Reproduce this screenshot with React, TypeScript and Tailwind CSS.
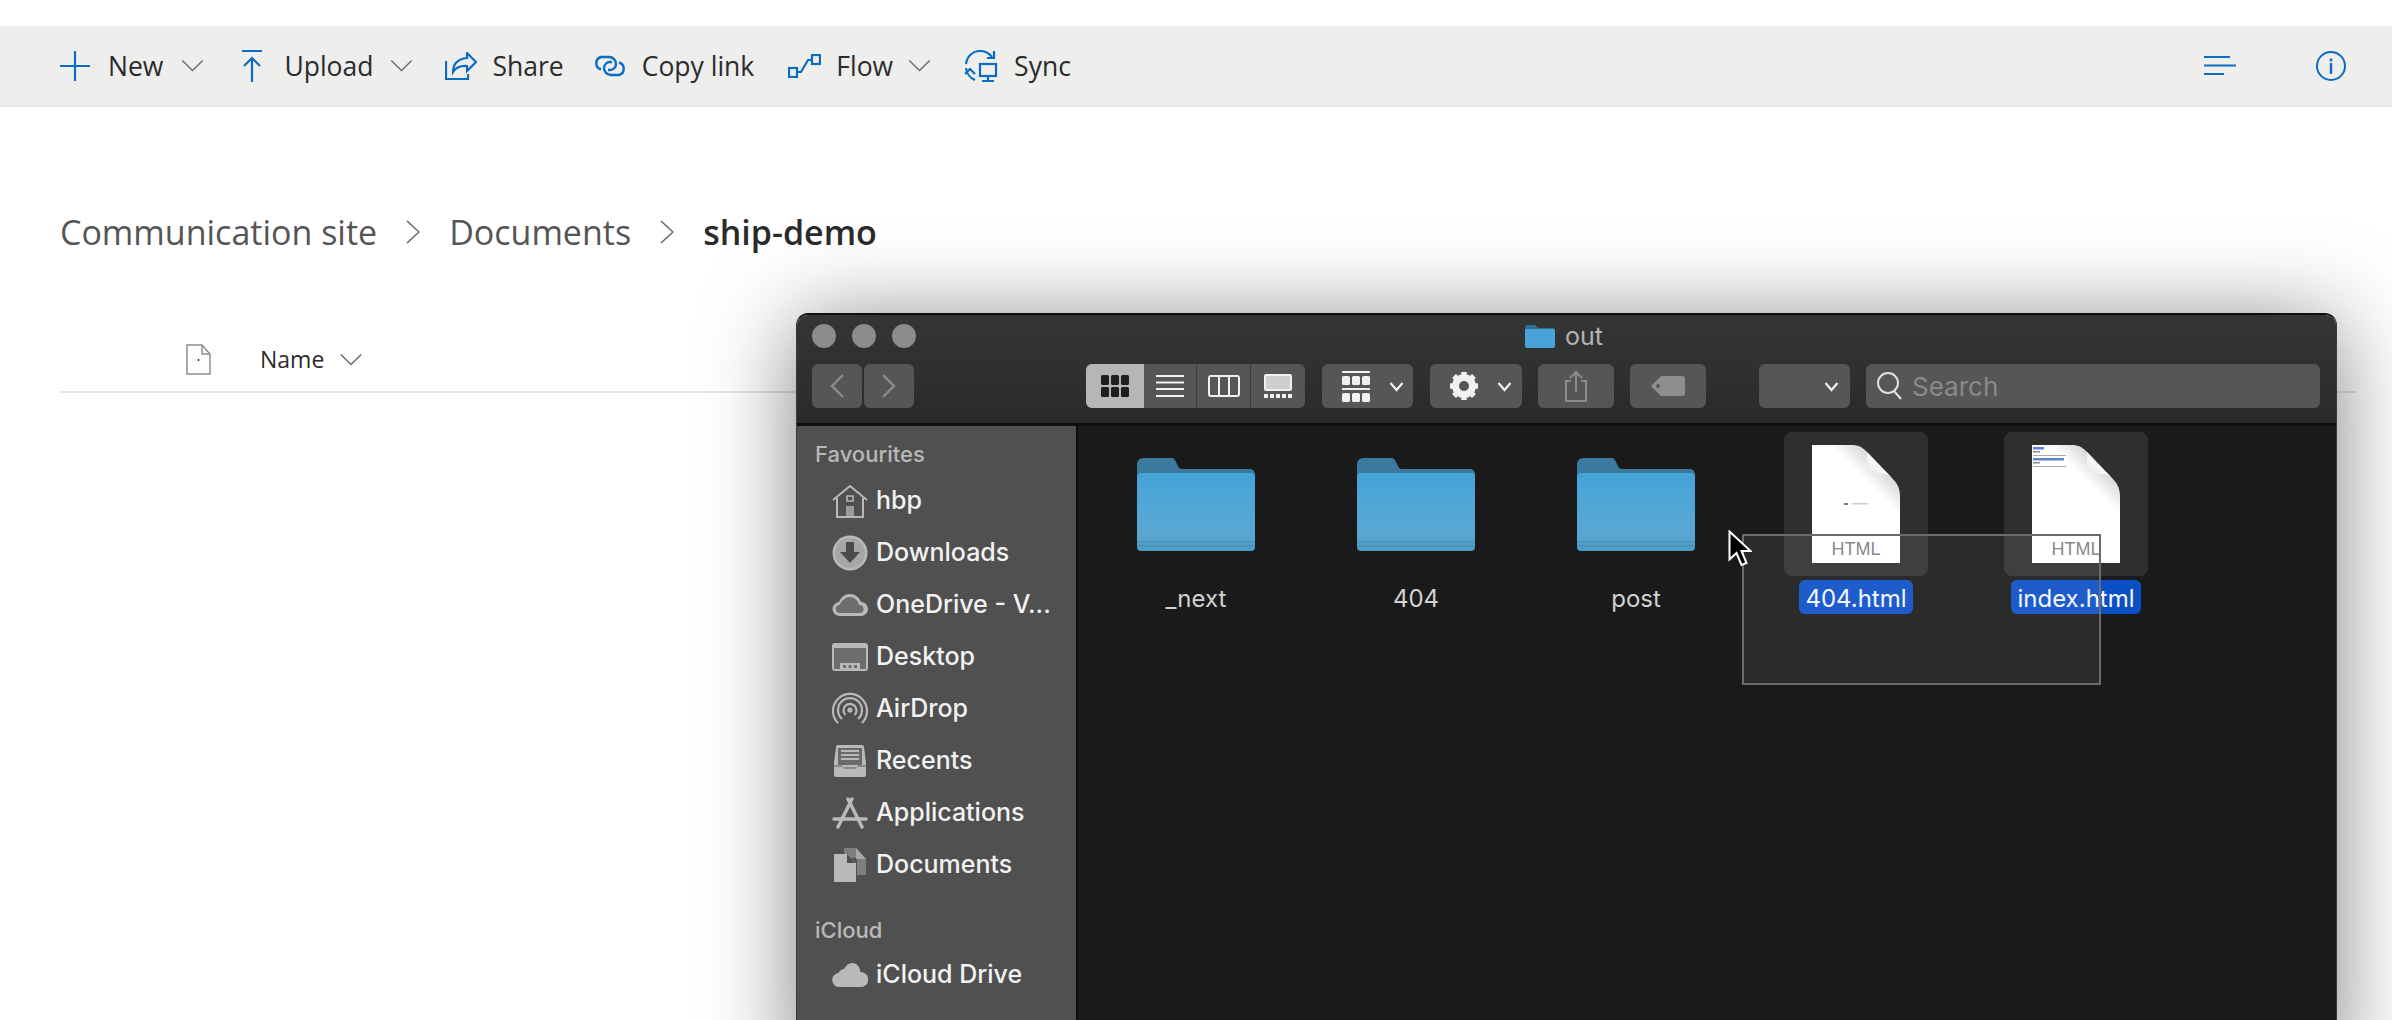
import type { ReactNode } from 'react';

const BLUE = '#0b6cc4';

function Chevron({ className = '' }: { className?: string }) {
  return (
    <svg viewBox="0 0 24 14" className={className} fill="none" stroke="#6b6b6b" strokeWidth="1.5">
      <path d="M1 1.5 12 12.5 23 1.5" />
    </svg>
  );
}

function PlusIcon() {
  return (
    <svg width="30" height="30" viewBox="0 0 30 30" stroke={BLUE} strokeWidth="2.2">
      <path d="M15 0v30M0 15h30" />
    </svg>
  );
}

function UploadIcon() {
  return (
    <svg width="20" height="32" viewBox="0 0 20 32" fill="none" stroke={BLUE} strokeWidth="2.2">
      <path d="M0 1h20M10 32V8M2 16l8-8 8 8" />
    </svg>
  );
}

function ShareIcon() {
  return (
    <svg width="32" height="28" viewBox="0 0 32 28" fill="none" stroke={BLUE} strokeWidth="2.2">
      <path d="M1 9v18h22v-5" />
      <path d="M22 1l9 9-9 9v-5c-7-.5-11 1-14 6 0-8 5-13 14-14z" />
    </svg>
  );
}

function LinkIcon() {
  return (
    <svg width="32" height="22" viewBox="0 0 32 22" fill="none" stroke={BLUE} strokeWidth="2.4">
      <path d="M7 14.500A6.500 6.500 0 0 1 7 2h8a7 7 0 0 1 7 7 6 6 0 0 1-6 6h-2" />
      <path d="M25 7.500A6.500 6.500 0 0 1 25 20h-8a7 7 0 0 1-7-7 6 6 0 0 1 6-6h2" />
    </svg>
  );
}

function FlowIcon() {
  return (
    <svg width="33" height="24" viewBox="0 0 33 24" fill="none" stroke={BLUE} strokeWidth="2.2">
      <rect x="1" y="14" width="8" height="9" />
      <rect x="24" y="1" width="8" height="9" />
      <path d="M9 18h4l7-12h4" />
    </svg>
  );
}

function SyncIcon() {
  return (
    <svg width="34" height="32" viewBox="0 0 34 32" fill="none" stroke={BLUE} strokeWidth="2.2">
      <path d="M2 14C3 6 9 1 16 1c5 0 9 2 12 6" />
      <path d="M30 1v7h-7" />
      <path d="M2 18c.5 5 4 10 9 12" />
      <path d="M1 24l5-5 5 5" />
      <rect x="16" y="14" width="16" height="12" fill="#eeeeec" />
      <path d="M24 26v5M18 31h12" />
    </svg>
  );
}

function SortIcon() {
  return (
    <svg width="32" height="20" viewBox="0 0 32 20" stroke={BLUE} strokeWidth="2">
      <path d="M0 1h26M0 9.500h32M0 18h20" />
    </svg>
  );
}

function InfoIcon() {
  return (
    <svg width="30" height="30" viewBox="0 0 30 30" fill="none" stroke={BLUE} strokeWidth="2">
      <circle cx="15" cy="15" r="14" />
      <path d="M15 12v11" strokeWidth="2.4" />
      <path d="M15 7.500v3" strokeWidth="2.4" />
    </svg>
  );
}

function ToolItem({ icon, label, caret, iconGap, caretGap, next }: { icon: ReactNode; label: string; caret?: boolean; iconGap: string; caretGap?: string; next: string }) {
  return (
    <div className={`flex items-center ${next}`}>
      <div className={iconGap}>{icon}</div>
      <span className="whitespace-nowrap pt-[2px]">{label}</span>
      {caret && <Chevron className={`w-[23px] h-[13px] ${caretGap}`} />}
    </div>
  );
}

function Toolbar() {
  return (
    <div className="flex items-center justify-between h-[81px] pl-[60px] pr-[46px] bg-[#eeeeec] border-b-2 border-[#e6e6e4] text-[26.500px] text-[#2b2b2b] font-['Open_Sans',sans-serif]">
      <div className="flex items-center">
        <ToolItem icon={<PlusIcon />} label="New" caret iconGap="mr-[18px]" caretGap="ml-[18px]" next="mr-[38px]" />
        <ToolItem icon={<UploadIcon />} label="Upload" caret iconGap="mr-[22px]" caretGap="ml-[17px]" next="mr-[32px]" />
        <ToolItem icon={<ShareIcon />} label="Share" iconGap="mr-[15px]" next="mr-[30px]" />
        <ToolItem icon={<LinkIcon />} label="Copy link" iconGap="mr-[16px]" next="mr-[34px]" />
        <ToolItem icon={<FlowIcon />} label="Flow" caret iconGap="mr-[15px]" caretGap="ml-[15px]" next="mr-[33px]" />
        <ToolItem icon={<SyncIcon />} label="Sync" iconGap="mr-[16px]" next="" />
      </div>
      <div className="flex items-center gap-[80px]">
        <SortIcon />
        <InfoIcon />
      </div>
    </div>
  );
}

function Breadcrumb() {
  return (
    <div className="flex items-center h-[50px] mt-[100px] ml-[60px] text-[34px] text-[#555] font-['Open_Sans',sans-serif]">
      <span>Communication site</span>
      <svg viewBox="0 0 14 24" className="w-[14px] h-[24px] mx-[29px]" fill="none" stroke="#666" strokeWidth="1.500"><path d="M1 1l12 11L1 23" /></svg>
      <span>Documents</span>
      <svg viewBox="0 0 14 24" className="w-[14px] h-[24px] mx-[29px]" fill="none" stroke="#666" strokeWidth="1.500"><path d="M1 1l12 11L1 23" /></svg>
      <span className="font-semibold text-[#2b2b2b]">ship-demo</span>
    </div>
  );
}

function ListHeader() {
  return (
    <div className="flex items-center h-[60px] mt-[76px] mr-[36px] ml-[60px] pl-[126px] pb-[6px] border-b-2 border-[#e5e5e5] text-[23px] text-[#2b2b2b] font-['Open_Sans',sans-serif]">
      <svg width="25" height="31" viewBox="0 0 25 31" fill="none" stroke="#8f8f8f" strokeWidth="1.500" className="mr-[49px]">
        <path d="M1 1h15l8 9v20H1z" />
        <path d="M16 1v9h8" />
        <path d="M12.500 15v2" stroke="#333" />
      </svg>
      <span>Name</span>
      <Chevron className="w-[24px] h-[13px] ml-[15px]" />
    </div>
  );
}

function NavButton({ dir }: { dir: 'l' | 'r' }) {
  return (
    <div className="flex items-center justify-center w-[50px] h-[44px] rounded-[6px] bg-[#555656]">
      <svg width="14" height="24" viewBox="0 0 14 24" fill="none" stroke="#8c8c8c" strokeWidth="2.400">
        <path d={dir === 'l' ? 'M13 1 2 12l11 11' : 'M1 1l11 11L1 23'} />
      </svg>
    </div>
  );
}

function TbButton({ className, children }: { className: string; children?: ReactNode }) {
  return <div className={`flex items-center justify-center h-[44px] rounded-[6px] bg-[#555656] ${className}`}>{children}</div>;
}

function MiniCaret() {
  return (
    <svg width="15" height="11" viewBox="0 0 15 11" fill="none" stroke="#f0f0f0" strokeWidth="2.200">
      <path d="M1.500 2 7.500 9l6-7" />
    </svg>
  );
}

function GridGlyph() {
  return (
    <svg width="28" height="22" viewBox="0 0 28 22" fill="#1f1f1f">
      {[0, 10, 20].map((x) => (
        <g key={x}>
          <rect x={x} y="0" width="8" height="10" rx="1.500" />
          <rect x={x} y="12" width="8" height="10" rx="1.500" />
        </g>
      ))}
    </svg>
  );
}

function ViewSwitch() {
  return (
    <div className="flex w-[219px] h-[44px] rounded-[6px] overflow-hidden bg-[#555656]">
      <div className="flex items-center justify-center w-[58px] bg-[#b6b6b6]"><GridGlyph /></div>
      <div className="flex items-center justify-center w-[53px] border-r border-[#3c3c3c]">
        <svg width="28" height="22" viewBox="0 0 28 22" stroke="#f0f0f0" strokeWidth="2"><path d="M0 1h28M0 7.500h28M0 14h28M0 21h28" /></svg>
      </div>
      <div className="flex items-center justify-center w-[54px] border-r border-[#3c3c3c]">
        <svg width="32" height="22" viewBox="0 0 32 22" fill="none" stroke="#f0f0f0" strokeWidth="2"><rect x="1" y="1" width="30" height="20" rx="2" /><path d="M11 1v20M21 1v20" /></svg>
      </div>
      <div className="flex items-center justify-center flex-1">
        <svg width="28" height="24" viewBox="0 0 28 24">
          <rect x="1" y="1" width="26" height="15" rx="1" fill="#cfcfcf" stroke="#f0f0f0" strokeWidth="2" />
          {[0, 6, 12, 18, 24].map((x) => <rect key={x} x={x} y="20" width="4" height="4" fill="#f0f0f0" />)}
        </svg>
      </div>
    </div>
  );
}

function FinderTitleBar() {
  return (
    <div className="shrink-0 h-[111px] bg-gradient-to-b from-[#343636] to-[#2a2a2a] border-b-[3px] border-[#0d0d0d]">
      <div className="flex items-center h-[42px] pl-[15px] gap-[16px]">
        <div className="w-[24px] h-[24px] rounded-full bg-[#8b8b8b]" />
        <div className="w-[24px] h-[24px] rounded-full bg-[#8b8b8b]" />
        <div className="w-[24px] h-[24px] rounded-full bg-[#8b8b8b]" />
        <div className="flex items-center gap-[10px] ml-[593px] text-[25px] text-[#b4b4b4]">
          <svg width="30" height="24" viewBox="0 0 30 24">
            <path d="M0 3a2 2 0 0 1 2-2h8l3 3h15a2 2 0 0 1 2 2v4H0z" fill="#2f6f96" />
            <rect x="0" y="5" width="30" height="19" rx="2" fill="#4aa3d8" />
          </svg>
          <span className="pt-[2px]">out</span>
        </div>
      </div>
      <div className="flex items-center pl-[15px] pt-[7px]">
        <div className="flex gap-[2px] mr-[172px]">
          <NavButton dir="l" />
          <NavButton dir="r" />
        </div>
        <ViewSwitch />
        <TbButton className="w-[91px] ml-[17px] pl-[10px] gap-[19px]">
          <svg width="28" height="32" viewBox="0 0 28 32" fill="#f0f0f0">
            <path d="M0 1h28v2H0zM0 18h28v2H0z" />
            {[0, 10, 20].map((x) => (
              <g key={x}>
                <rect x={x} y="6" width="8" height="9" rx="1.500" />
                <rect x={x} y="23" width="8" height="9" rx="1.500" />
              </g>
            ))}
          </svg>
          <MiniCaret />
        </TbButton>
        <TbButton className="w-[92px] ml-[17px] pl-[10px] gap-[19px]">
          <svg width="28" height="28" viewBox="0 0 28 28">
            <circle cx="14" cy="14" r="8.500" fill="none" stroke="#f0f0f0" strokeWidth="7" />
            <g stroke="#f0f0f0" strokeWidth="5.500">
              <path d="M14 0v6M14 22v6M0 14h6M22 14h6M4 4l4 4M20 20l4 4M24 4l-4 4M8 20l-4 4" />
            </g>
          </svg>
          <MiniCaret />
        </TbButton>
        <TbButton className="w-[76px] ml-[16px]">
          <svg width="22" height="32" viewBox="0 0 22 32" fill="none" stroke="#8c8c8c" strokeWidth="2">
            <path d="M6 11H1v20h20V11h-5M11 22V2M5 8l6-6 6 6" />
          </svg>
        </TbButton>
        <TbButton className="w-[76px] ml-[16px]">
          <svg width="34" height="20" viewBox="0 0 34 20">
            <path d="M0 10 9 1a3 3 0 0 1 2-1h20a3 3 0 0 1 3 3v14a3 3 0 0 1-3 3H11a3 3 0 0 1-2-1z" fill="#8e8e8e" />
            <circle cx="7" cy="10" r="2" fill="#555656" />
          </svg>
        </TbButton>
        <TbButton className="justify-end w-[91px] ml-[53px] pr-[11px]"><MiniCaret /></TbButton>
        <div className="flex items-center w-[454px] h-[44px] ml-[16px] pl-[11px] rounded-[6px] bg-[#555656] text-[26px] text-[#8a8a8a]">
          <svg width="26" height="28" viewBox="0 0 26 28" fill="none" stroke="#e0e0e0" strokeWidth="2" className="mr-[9px]">
            <circle cx="11" cy="11" r="10" />
            <path d="M17 19l7 8" />
          </svg>
          <span>Search</span>
        </div>
      </div>
    </div>
  );
}

const ICON = '#b9b9b9';

function HomeIcon() {
  return (
    <svg width="36" height="34" viewBox="0 0 36 34" fill="none" stroke={ICON} strokeWidth="2">
      <path d="M1 16 18 2l17 14" />
      <path d="M5 14v19h26V14" />
      <rect x="15" y="12" width="6" height="5" strokeWidth="1.500" />
      <rect x="14" y="22" width="8" height="11" fill={ICON} stroke="none" opacity="0.7" />
    </svg>
  );
}

function DownloadsIcon() {
  return (
    <svg width="36" height="36" viewBox="0 0 36 36">
      <circle cx="18" cy="18" r="17.500" fill={ICON} />
      <circle cx="18" cy="18" r="15" fill="#a6a6a6" />
      <path d="M14 7h8v10h6L18 28 8 17h6z" fill="#4a4a4a" />
    </svg>
  );
}

function OneDriveIcon() {
  return (
    <svg width="36" height="24" viewBox="0 0 36 24">
      <path d="M8 23a7 7 0 0 1-1-14C9 4 13 1 18 1c5 0 9 3 11 8a7 7 0 0 1 0 14z" fill={ICON} />
      <path d="M8 20a4 4 0 0 1-.5-8C10 7 14 4 18 4c4 0 8 3 9 8a4 4 0 0 1 1 8z" fill="#6d6d6d" />
    </svg>
  );
}

function DesktopIcon() {
  return (
    <svg width="36" height="28" viewBox="0 0 36 28">
      <rect width="36" height="28" rx="3" fill={ICON} />
      <rect x="2" y="5" width="32" height="21" fill="#6e6e6e" />
      <rect x="8" y="20" width="20" height="8" fill={ICON} />
      <path d="M11 22h3v3h-3zM16.500 22h3v3h-3zM22 22h3v3h-3z" fill="#6e6e6e" />
    </svg>
  );
}

function AirDropIcon() {
  return (
    <svg width="36" height="36" viewBox="0 0 36 36" fill="none" stroke={ICON} strokeWidth="2.200">
      <path d="M6 32A17 17 0 1 1 30 32" />
      <path d="M10 28A12 12 0 1 1 26 28" />
      <path d="M13.500 24a6.500 6.500 0 1 1 9 0" />
      <circle cx="18" cy="19" r="1.500" />
    </svg>
  );
}

function RecentsIcon() {
  return (
    <svg width="32" height="32" viewBox="0 0 32 32">
      <path d="M4 0h24a2 2 0 0 1 2 2l2 16v12a2 2 0 0 1-2 2H2a2 2 0 0 1-2-2V18L2 2a2 2 0 0 1 2-2z" fill={ICON} />
      <rect x="4" y="3" width="24" height="17" fill="#6a6a6a" />
      <path d="M7 6h18M7 10h18M7 14h18" stroke={ICON} strokeWidth="1.800" />
      <path d="M0 20h8l2 4h12l2-4h8v2H0z" fill="#8a8a8a" />
    </svg>
  );
}

function AppsIcon() {
  return (
    <svg width="36" height="32" viewBox="0 0 36 32" fill="none" stroke={ICON} strokeWidth="3.500" strokeLinecap="round">
      <path d="M20 2 6 30M16 2l14 28" />
      <path d="M2 22h32" />
    </svg>
  );
}

function DocsIcon() {
  return (
    <svg width="33" height="34" viewBox="0 0 33 34">
      <path d="M10 0h12l10 11v16h-9V10H10z" fill="#7e7e7e" />
      <path d="M22 0l10 11H22z" fill="#a8a8a8" />
      <path d="M0 6h13l9 9v19H0z" fill={ICON} />
      <path d="M13 6l9 9h-9z" fill="#505050" />
    </svg>
  );
}

function CloudIcon() {
  return (
    <svg width="36" height="26" viewBox="0 0 36 26">
      <path d="M8 25a7 7 0 0 1-1.500-14C8 8 10 7 12 7c2-4 5-6 8-6 5 0 8 4 8.500 9A7.500 7.500 0 0 1 29 25z" fill={ICON} />
    </svg>
  );
}

const favourites: { label: string; icon: ReactNode }[] = [
  { label: 'hbp', icon: <HomeIcon /> },
  { label: 'Downloads', icon: <DownloadsIcon /> },
  { label: 'OneDrive - V...', icon: <OneDriveIcon /> },
  { label: 'Desktop', icon: <DesktopIcon /> },
  { label: 'AirDrop', icon: <AirDropIcon /> },
  { label: 'Recents', icon: <RecentsIcon /> },
  { label: 'Applications', icon: <AppsIcon /> },
  { label: 'Documents', icon: <DocsIcon /> },
];

function SideRow({ label, icon }: { label: string; icon: ReactNode }) {
  return (
    <div className="flex items-center h-[52px] pl-[35px] text-[25px] font-medium text-[#f2f2f2]">
      <div className="flex items-center justify-center w-[36px] mr-[8px]">{icon}</div>
      <span className="whitespace-nowrap">{label}</span>
    </div>
  );
}

function Sidebar() {
  return (
    <div className="shrink-0 w-[281px] pt-[13px] bg-[#505050] border-r-2 border-[#0d0d0d]">
      <div className="h-[30px] pl-[18px] text-[22px] leading-[30px] font-medium text-[#b9b9b9]">Favourites</div>
      <div className="mt-[6px]">
        {favourites.map((f) => <SideRow key={f.label} {...f} />)}
      </div>
      <div className="h-[30px] mt-[24px] pl-[18px] text-[22px] leading-[30px] font-medium text-[#b9b9b9]">iCloud</div>
      <div className="mt-[4px]">
        <SideRow label="iCloud Drive" icon={<CloudIcon />} />
      </div>
    </div>
  );
}

function FolderIcon() {
  return (
    <svg width="118" height="93" viewBox="0 0 118 93">
      <defs>
        <linearGradient id="folderFront" x1="0" y1="0" x2="0" y2="1">
          <stop offset="0" stopColor="#45a3d8" />
          <stop offset="0.75" stopColor="#5aa9d4" />
          <stop offset="1" stopColor="#4f9bc8" />
        </linearGradient>
      </defs>
      <path d="M0 6a6 6 0 0 1 6-6h28c3 0 4 2 5 4l2 4c1 2 2 3 4 3h68a5 5 0 0 1 5 5v10H0z" fill="#3b7a9f" />
      <rect y="15" width="118" height="78" rx="4" fill="url(#folderFront)" />
      <path d="M0 84h118M0 88h118" stroke="#4387ae" strokeWidth="1.200" />
    </svg>
  );
}

function DocIcon({ thumb }: { thumb: ReactNode }) {
  return (
    <div className="relative w-[88px] h-[118px]">
      <svg width="88" height="118" viewBox="0 0 88 118" className="block">
        <defs>
          <linearGradient id="docShade" gradientUnits="userSpaceOnUse" x1="42" y1="38" x2="70" y2="10">
            <stop offset="0.25" stopColor="#ffffff" />
            <stop offset="1" stopColor="#c9c9c9" />
          </linearGradient>
          <linearGradient id="foldShade" gradientUnits="userSpaceOnUse" x1="58" y1="28" x2="70" y2="16">
            <stop offset="0" stopColor="#e9e9e9" />
            <stop offset="1" stopColor="#ffffff" />
          </linearGradient>
        </defs>
        <path d="M0 0h40c6 0 10 2 14 6l26 27c5 5 8 10 8 18v67H0z" fill="url(#docShade)" />
        <path d="M55 7 79 32c-4-3-10-4-15-4-6 0-9-2-9-6z" fill="url(#foldShade)" />
        {thumb}
      </svg>
      <span className="absolute left-0 right-0 bottom-[3px] text-center text-[18px] leading-[22px] text-[#808080] font-['Liberation_Sans',sans-serif]">HTML</span>
    </div>
  );
}

const thumb404 = (
  <g>
    <rect x="32" y="58" width="4" height="2" fill="#777" />
    <rect x="40" y="58" width="16" height="1.500" fill="#ccc" />
  </g>
);

const thumbIndex = (
  <g>
    <rect x="1" y="2" width="11" height="2.500" fill="#5c86c9" />
    <rect x="1" y="6" width="7" height="1.500" fill="#888" />
    <rect x="1" y="10" width="33" height="1" fill="#aaa" />
    <rect x="1" y="13" width="31" height="2.500" fill="#5c86c9" />
    <rect x="1" y="17" width="7" height="1.500" fill="#888" />
    <rect x="1" y="21" width="33" height="1" fill="#aaa" />
  </g>
);

function FolderCell({ name }: { name: string }) {
  return (
    <div className="flex flex-col items-center w-[220px]">
      <div className="flex items-center justify-center w-[144px] h-[144px]"><FolderIcon /></div>
      <div className="h-[34px] mt-[4px] px-[6px] text-[24px] leading-[37px] text-[#d2d2d2]">{name}</div>
    </div>
  );
}

function FileCell({ name, thumb }: { name: string; thumb: ReactNode }) {
  return (
    <div className="flex flex-col items-center w-[220px]">
      <div className="flex items-center justify-center w-[144px] h-[144px] rounded-[8px] bg-[#2f2f2f]">
        <DocIcon thumb={thumb} />
      </div>
      <div className="h-[34px] mt-[4px] px-[6px] rounded-[6px] bg-[#0a4fc6] text-[24px] leading-[37px] text-[#f4f7ff]">{name}</div>
    </div>
  );
}

function FileArea() {
  return (
    <div className="relative flex-1 pt-[6px] pl-[8px] bg-[#1a1a1a] text-[#d2d2d2]">
      <div className="flex">
        <FolderCell name="_next" />
        <FolderCell name="404" />
        <FolderCell name="post" />
        <FileCell name="404.html" thumb={thumb404} />
        <FileCell name="index.html" thumb={thumbIndex} />
      </div>
      {/* drag selection + cursor sit over the icons */}
      <div className="absolute left-[664px] top-[108px] w-[359px] h-[151px] border-2 border-[#6b6b6b] bg-white/[0.08]" />
      <svg width="24" height="38" viewBox="0 0 24 38" className="absolute left-[650px] top-[104px]">
        <path d="M1.500 1.500v28l7-6.500 5 12 5-2-5-12h9z" fill="#000" stroke="#fff" strokeWidth="2" />
      </svg>
    </div>
  );
}

function FinderWindow() {
  return (
    <div className="absolute left-[796px] top-[313px] flex flex-col w-[1541px] h-[707px] rounded-t-[12px] overflow-hidden border-t-2 border-t-[#101010] border-x border-x-[#3a3a3a] font-['Inter',sans-serif]">
      <FinderTitleBar />
      <div className="flex flex-1 min-h-0">
        <Sidebar />
        <FileArea />
      </div>
    </div>
  );
}

export default function App() {
  return (
    <div className="relative h-[1020px] overflow-hidden bg-white">
      <div className="pt-[26px]">
        <Toolbar />
        <Breadcrumb />
        <ListHeader />
      </div>
      {/* shadow lives on its own layer, window clips its content */}
      <div className="absolute left-[796px] top-[313px] w-[1541px] h-[760px] rounded-t-[12px] shadow-[0_10px_90px_rgba(0,0,0,0.5)]" />
      <FinderWindow />
    </div>
  );
}
